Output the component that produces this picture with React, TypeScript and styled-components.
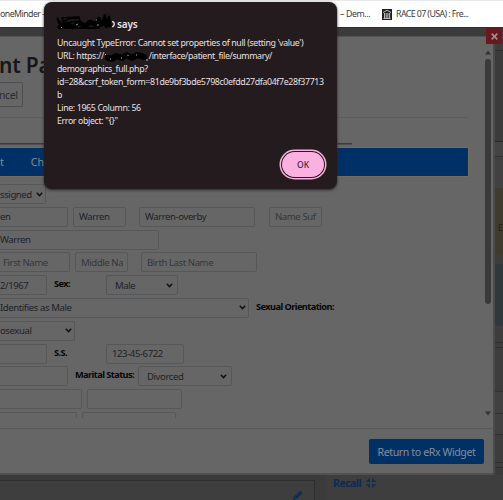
import React from "react";
import styled, { createGlobalStyle } from "styled-components";

const Global = createGlobalStyle`
  * { box-sizing: border-box; }
  body { margin: 0; overflow: hidden; background: #3b3b3b; font-family: "Noto Sans", "Open Sans", sans-serif; }
`;

const Page = styled.div`
  position: relative;
  width: 503px;
  height: 500px;
  overflow: hidden;
  display: flex;
  flex-direction: column;
`;

const Label = styled.span<{ $size?: number; $track?: number; $weight?: number; $color?: string }>`
  display: block;
  white-space: nowrap;
  font-size: ${(p) => p.$size ?? 10}px;
  letter-spacing: ${(p) => p.$track ?? 0}px;
  font-weight: ${(p) => p.$weight ?? 400};
  color: ${(p) => p.$color ?? "inherit"};
`;
const Value = styled(Label).attrs({ $size: 9.6, $track: -0.43 })``;
const Strong = styled(Label).attrs({ $size: 9.2, $track: -0.55, $weight: 700 })``;
const MessageText = styled(Label).attrs({ $size: 8.8, $track: -0.36 })``;

/* Browser bookmarks */
const Bookmarks = styled.header`
  flex: none;
  height: 27px;
  display: flex;
  align-items: center;
  background: #fff;
  color: #3b3b3f;
  line-height: 12px;
  border-top: 1px solid #e8e8ea;
`;
const Bookmark = styled.div<{ $w?: number; $left?: number }>`
  display: flex;
  align-items: center;
  gap: 4px;
  flex: none;
  width: ${(p) => (p.$w ? `${p.$w}px` : "auto")};
  margin-left: ${(p) => p.$left ?? 0}px;
`;

/* Dimmed page under the modal */
const Backdrop = styled.main`
  flex: 1;
  display: flex;
  flex-direction: column;
  background: #3b3b3b;
  border-top: 1px solid #303030;
`;
const SideColumn = styled.div`
  height: 447px;
  width: 8px;
  align-self: flex-end;
  display: flex;
  flex-direction: column;
`;
const SideBand = styled.div<{ $h: number; $bg?: string; $line?: string }>`
  height: ${(p) => p.$h}px;
  flex: none;
  overflow: hidden;
  background: ${(p) => p.$bg ?? "#3d3d3d"};
  border-bottom: 1px solid ${(p) => p.$line ?? "transparent"};
`;
const BandLetter = styled.div`
  padding: 35px 0 0 3px;
  font-size: 9px;
  line-height: 10px;
  color: #301b1b;
`;
const LowerPanels = styled.div`
  flex: 1;
  display: flex;
  gap: 11px;
`;
const NotesPanel = styled.div`
  width: 315px;
  margin-top: 5px;
  border: solid #2f2f2f;
  border-width: 1px 1px 0 0;
  background: #3e3e3e;
  display: flex;
  justify-content: flex-end;
  padding: 8px 10px 0 0;
`;
const RecallPanel = styled.div`
  flex: 1;
  background: #3e3e3e;
  display: flex;
  align-items: flex-start;
  gap: 5px;
  padding: 1px 0 0 7px;
  line-height: 14px;
`;
const CompressIcon = styled.svg`
  margin-top: 2px;
`;

/* Modal */
const Modal = styled.section`
  position: absolute;
  left: -10px;
  top: 36px;
  width: 505px;
  height: 439px;
  padding-left: 9px;
  background: #666;
  border: 1px solid #4b4b4b;
  border-top-color: #525252;
  border-bottom: 2px solid #515151;
  border-right-width: 2px;
  border-radius: 3px;
  display: flex;
  flex-direction: column;
  color: #202326;
`;
const Close = styled.button`
  position: absolute;
  left: 486px;
  top: 28px;
  width: 16px;
  height: 16px;
  padding: 0;
  border: 0;
  background: #68191f;
  display: grid;
  place-items: center;
`;
const Viewport = styled.div`
  height: 392px;
  display: flex;
  border-bottom: 1px solid #585858;
`;
const Content = styled.div`
  width: 485px;
  flex: none;
  height: 381px;
  overflow: hidden;
`;
const Heading = styled.h2`
  margin: 0 0 0 -1px;
  padding-top: 15px;
  height: 45px;
  font-size: 21px;
  line-height: 27px;
  font-weight: 600;
  letter-spacing: -0.2px;
  color: #161719;
`;
const Cancel = styled.button`
  display: block;
  width: 24px;
  height: 25px;
  margin-left: -1px;
  padding: 0;
  border: 1px solid #4c4e50;
  border-left: 0;
  border-radius: 0 2px 2px 0;
  background: transparent;
  color: #292c2f;
  font: 10.5px/22px "Noto Sans", sans-serif;
  text-align: left;
  letter-spacing: -0.4px;
`;
const Divider = styled.div`
  width: 468px;
  margin-top: 10px;
  height: 26px;
  border-top: 1px solid #5c5c5c;
`;
const TabLine = styled.div`
  width: 352px;
  height: 2px;
  background: #3c3c3e;
  border-bottom: 1px solid #514e50;
`;
const Tabs = styled.nav`
  width: 468px;
  height: 28px;
  margin: 3px 0 8px;
  display: flex;
  align-items: center;
  gap: 27px;
  background: #003166;
  outline: 1px solid #716b62;
  color: #858d98;
`;
const Rows = styled.div`
  display: grid;
  grid-auto-rows: 22.8px;
`;
const Row = styled.div`
  display: flex;
  align-items: flex-start;
`;
const Field = styled.div<{ $w: number; $gap?: number; $pad?: number; $open?: boolean; $dim?: boolean }>`
  width: ${(p) => p.$w}px;
  margin-left: ${(p) => p.$gap ?? 0}px;
  padding: 0 ${(p) => (p.$open ? 2 : 4)}px 0 ${(p) => p.$pad ?? 5}px;
  flex: none;
  height: 20px;
  display: flex;
  align-items: center;
  justify-content: space-between;
  border: 1px solid #555759;
  ${(p) => (p.$open ? "border-left: 0; border-radius: 0 2px 2px 0;" : "border-radius: 2px;")}
  color: ${(p) => (p.$dim ? "#34383b" : "#202326")};
`;
const Clip = styled.div`
  overflow: hidden;
`;
const Caption = styled.div<{ $w: number; $gap?: number }>`
  width: ${(p) => p.$w}px;
  margin-left: ${(p) => p.$gap ?? 7}px;
  flex: none;
  color: #070707;
  line-height: 17px;
`;
const ScrollBar = styled.div`
  width: 6px;
  flex: none;
  height: 380px;
  padding-top: 13px;
  display: flex;
  flex-direction: column;
  align-items: center;
`;
const Thumb = styled.div`
  width: 6px;
  height: 245px;
  margin: 4px 0 107px;
  flex: none;
  border-radius: 3px;
  background: #3a3a3a;
`;
const Footer = styled.footer`
  flex: 1;
  display: flex;
  justify-content: flex-end;
  align-items: flex-start;
  padding: 10px 9px 0 0;
`;
const ReturnButton = styled.button`
  width: 115px;
  height: 25px;
  border: 0;
  border-radius: 2px;
  padding: 0;
  background: #003166;
  color: #858d98;
  display: grid;
  place-items: center;
  font-family: inherit;
`;

/* Browser alert */
const Alert = styled.section`
  position: absolute;
  left: 44px;
  top: 2px;
  width: 293px;
  height: 187px;
  padding: 12px 11px 10px 13px;
  border-radius: 8px;
  background: #231b1e;
  box-shadow: 0 1px 3px #222;
  color: #e9e0e3;
  display: flex;
  flex-direction: column;
`;
const AlertTitle = styled.div`
  display: flex;
  height: 23px;
  margin-left: -2px;
  line-height: 20px;
`;
const Message = styled.div`
  line-height: 13px;
  display: flex;
  flex-direction: column;
`;
const UrlLine = styled.div`
  display: flex;
`;
const Ok = styled.button`
  align-self: flex-end;
  margin-top: auto;
  width: 42px;
  height: 25px;
  margin-right: 2px;
  margin-bottom: 2px;
  padding: 0;
  border: 0;
  border-radius: 13px;
  background: #fbb1df;
  color: #49253c;
  box-shadow: 0 0 0 1px #231b1e, 0 0 0 2.5px #fbb1df;
  display: grid;
  place-items: center;
  font-family: inherit;
`;

const Chevron = () => (
  <svg width="7" height="5" viewBox="0 0 7 5" fill="none" stroke="#111" strokeWidth="1.5">
    <path d="M.8 .8 3.5 3.6 6.2 .8" />
  </svg>
);

const MuseumIcon = () => (
  <svg width="10" height="11" viewBox="0 0 10 11">
    <rect width="10" height="11" fill="#201e20" />
    <path d="M1 3.5 5 1.3 9 3.5M1.5 9.5h7M2.5 4v5M4.2 4v5M5.9 4v5M7.6 4v5" stroke="#e4e2e2" strokeWidth=".8" fill="none" />
  </svg>
);

const HostScribble = () => (
  <svg width="57" height="19" viewBox="0 0 57 19">
    <g fill="none" stroke="#000" strokeLinejoin="round" strokeLinecap="round">
      <path d="M2 5 5 12M3 4 6 11M7 4 24 3 25 7 9 9ZM6 8 14 5 24 4" strokeWidth="1.3" />
      <path d="M5 13 11 10 18 13 24 9 31 12 35 8 42 11 48 9 54 11" strokeWidth="5" />
      <path d="M39 11 44 4 46 12 50 1 51 13 54 3 55 12" strokeWidth="2.6" />
      <path d="M10 14h34" strokeWidth="2" />
    </g>
    <path d="M6 13.5h1M21 11l2-1M41 6h1M42 11h2" stroke="#b0a8ab" strokeWidth=".9" />
  </svg>
);

const HostTail = () => (
  <svg width="5" height="19" viewBox="0 0 5 19">
    <path d="M0 7.7C3 7.2 3 13 0 12.6" fill="none" stroke="#e9e0e3" strokeWidth="1.4" />
  </svg>
);

const UrlScribble = () => (
  <svg width="45" height="13" viewBox="0 0 45 13">
    <path d="M4 8 8 9 12 6 18 8 23 5 28 8 33 5 40 7" fill="none" stroke="#000" strokeWidth="6" strokeLinecap="round" strokeLinejoin="round" />
    <path d="M1 4l1 1M6 9h1M17 8h1M24 5v1M32 5h1M42 10h2" stroke="#bbb2b5" strokeWidth="1" />
  </svg>
);

export default function App() {
  return (
    <Page>
      <Global />
      <Bookmarks>
        <Bookmark $w={44}><Label $size={8.8} $track={-0.56}>oneMinder -</Label></Bookmark>
        <Bookmark $w={28} $left={296}><Label $size={8.8} $track={-0.4}>– Dem...</Label></Bookmark>
        <Bookmark $left={14}><MuseumIcon /><Label $size={8.8} $track={-0.58}>RACE 07 (USA) : Fre...</Label></Bookmark>
      </Bookmarks>
      <Backdrop>
        <SideColumn>
          <SideBand $h={23} $line="#303030" />
          <SideBand $h={91} $bg="#3b3b3b" $line="#102d4e" />
          <SideBand $h={15} $bg="#444" $line="#303030" />
          <SideBand $h={31} $bg="#414141" />
          <SideBand $h={67} $bg="#403b2f"><BandLetter>E</BandLetter></SideBand>
          <SideBand $h={9} />
          <SideBand $h={62} $bg="#30383c" />
          <SideBand $h={17} $line="#2d2d2d" />
          <SideBand $h={5} $line="#303030" />
          <SideBand $h={44} $line="#303030" />
          <SideBand $h={22} $bg="#414141" $line="#303030" />
          <SideBand $h={21} $bg="#414141" $line="#303030" />
          <SideBand $h={28} $line="#2b2b2b" />
          <SideBand $h={5} $line="#303030" />
        </SideColumn>
        <LowerPanels>
          <NotesPanel>
            <svg width="12" height="12" viewBox="0 0 12 12">
              <path d="M1 11 1.8 7.7 8.2 1.5 10.7 4 4.3 10.3Z" fill="#0a2c58" />
              <path d="M7 2.5 9.5 5M2.8 8.3 4 9.5M3.5 7.8 7 4.3" stroke="#3e3e3e" strokeWidth=".7" />
            </svg>
          </NotesPanel>
          <RecallPanel>
            <Label $size={10.5} $weight={700} $track={-0.5} $color="#0a2c58">Recall</Label>
            <CompressIcon width="10" height="10" viewBox="0 0 10 10" fill="none" stroke="#0a2c58" strokeWidth="1.5">
              <path d="M3.2 .5v2.7H.5M6.8 .5v2.7h2.7M3.2 9.5V6.8H.5M6.8 9.5V6.8h2.7" />
            </CompressIcon>
          </RecallPanel>
        </LowerPanels>
      </Backdrop>

      <Modal>
        <Viewport>
          <Content>
            <Heading>nt Pa</Heading>
            <Cancel>ncel</Cancel>
            <Divider />
            <TabLine />
            <Tabs>
              <Label $size={10.5}>t</Label>
              <Label $size={10.5}>Ch</Label>
            </Tabs>
            <Rows>
              <Row><Field $w={46} $pad={0} $open><Value>ssigned</Value><Chevron /></Field></Row>
              <Row>
                <Field $w={68} $pad={0} $open><Value>en</Value></Field>
                <Field $w={53} $gap={5}><Value>Warren</Value></Field>
                <Field $w={116} $gap={13}><Value>Warren-overby</Value></Field>
                <Field $w={53} $gap={14} $dim><Value>Name Suf</Value></Field>
              </Row>
              <Row><Field $w={159} $pad={0} $open><Value>Warren</Value></Field></Row>
              <Row>
                <Field $w={70} $pad={3} $open $dim><Value>First Name</Value></Field>
                <Field $w={53} $gap={5} $dim><Clip><Value>Middle Na</Value></Clip></Field>
                <Field $w={116} $gap={13} $dim><Value>Birth Last Name</Value></Field>
              </Row>
              <Row>
                <Field $w={47} $pad={0} $open><Value>2/1967</Value></Field>
                <Caption $w={52}><Strong>Sex:</Strong></Caption>
                <Field $w={72} $pad={8}><Value>Male</Value><Chevron /></Field>
              </Row>
              <Row>
                <Field $w={249} $pad={0} $open><Value>Identifies as Male</Value><Chevron /></Field>
                <Caption $w={80}><Strong>Sexual Orientation:</Strong></Caption>
              </Row>
              <Row><Field $w={75} $pad={0} $open><Value>osexual</Value><Chevron /></Field></Row>
              <Row>
                <Field $w={47} $open />
                <Caption $w={52}><Strong>S.S.</Strong></Caption>
                <Field $w={78}><Value>123-45-6722</Value></Field>
              </Row>
              <Row>
                <Field $w={68} $open />
                <Caption $w={63}><Strong>Marital Status:</Strong></Caption>
                <Field $w={94} $pad={8}><Value>Divorced</Value><Chevron /></Field>
              </Row>
              <Row><Field $w={82} $open /><Field $w={95} $gap={5} /></Row>
              <Row><Field $w={77} $open /><Field $w={94} $gap={5} /></Row>
            </Rows>
          </Content>
          <ScrollBar>
            <svg width="6" height="5" viewBox="0 0 6 5"><path d="M0 4.5 3 .5 6 4.5Z" fill="#333" /></svg>
            <Thumb />
            <svg width="6" height="5" viewBox="0 0 6 5"><path d="M0 .5 3 4.5 6 .5Z" fill="#333" /></svg>
          </ScrollBar>
        </Viewport>
        <Footer>
          <ReturnButton><Label $size={10.6} $track={-0.4}>Return to eRx Widget</Label></ReturnButton>
        </Footer>
      </Modal>
      <Close aria-label="Close">
        <svg width="7" height="7" viewBox="0 0 7 7" stroke="#929092" strokeWidth="1.7"><path d="M.7 .7 6.3 6.3M6.3 .7 .7 6.3" /></svg>
      </Close>

      <Alert role="alertdialog">
        <AlertTitle>
          <HostScribble />
          <HostTail />
          <Label $size={10} $weight={600} $track={-0.2}>says</Label>
        </AlertTitle>
        <Message>
          <MessageText>Uncaught TypeError: Cannot set properties of null (setting 'value')</MessageText>
          <UrlLine>
            <MessageText>URL: https://</MessageText>
            <UrlScribble />
            <MessageText>/interface/patient_file/summary/</MessageText>
          </UrlLine>
          <MessageText>demographics_full.php?</MessageText>
          <MessageText>id=28&amp;csrf_token_form=81de9bf3bde5798c0efdd27dfa04f7e28f37713</MessageText>
          <MessageText>b</MessageText>
          <MessageText>Line: 1965 Column: 56</MessageText>
          <MessageText>Error object: "{"{}"}"</MessageText>
        </Message>
        <Ok><Label $size={8.5} $weight={500}>OK</Label></Ok>
      </Alert>
    </Page>
  );
}
